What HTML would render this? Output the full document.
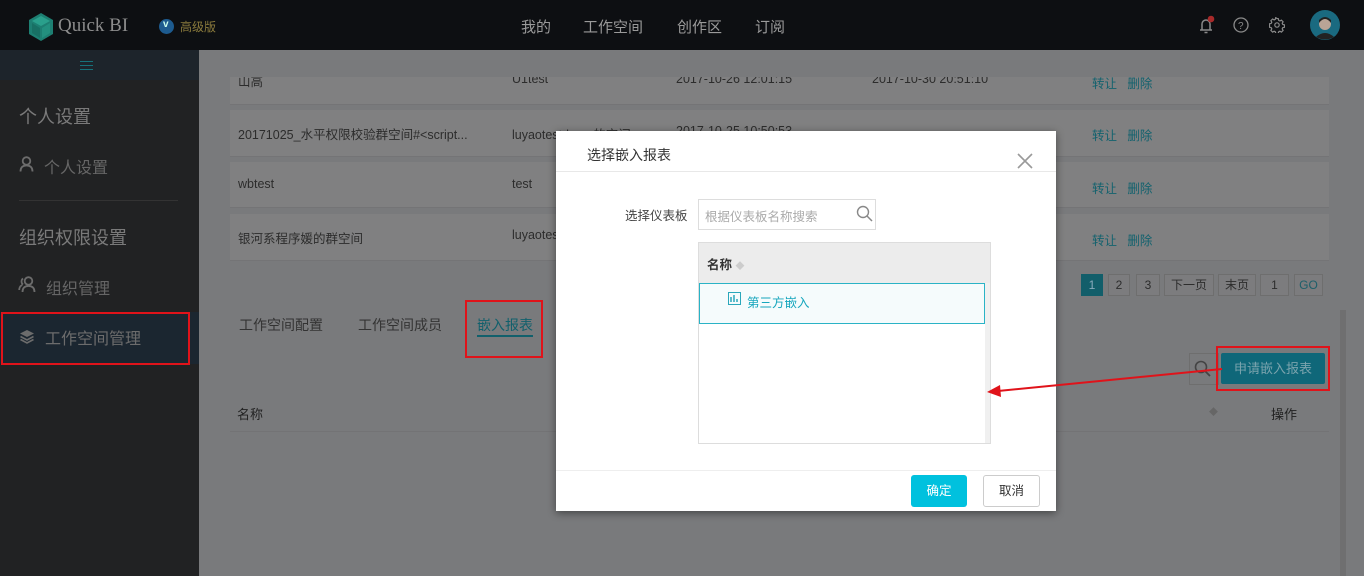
<!DOCTYPE html>
<html><head><meta charset="utf-8">
<style>
*{margin:0;padding:0;box-sizing:border-box}
body{width:1364px;height:576px;overflow:hidden;position:relative;background:#797a7c;font-family:"Liberation Sans","Noto Sans CJK SC",sans-serif;font-size:13px;color:#2e2e2e}
.abs{position:absolute}
.top{left:0;top:0;width:1364px;height:50px;background:#0d0f12}
.nav{color:#9a9a9a;font-size:15px;top:16px}
.side{left:0;top:50px;width:199px;height:526px;background:#212223}
.row{left:230px;width:1099px;background:#808081;box-shadow:0 1px 0 #747476;overflow:hidden}
.row span{position:absolute;color:#2c2c2c;font-size:12.5px}
.row .op{color:#13626e}
.modal{left:556px;top:131px;width:500px;height:380px;background:#fff;box-shadow:0 2px 8px rgba(0,0,0,.45)}
.pg{top:274px;height:22px;border:1px solid #6e6e6e;color:#2c2c2c;font-size:12px;text-align:center;line-height:20px;background:#7c7c7e}
.red{border:2px solid #e0131a}
</style></head><body>
<div class="abs top"></div>
<svg class="abs" style="left:28px;top:13px" width="26" height="28" viewBox="0 0 26 28"><polygon points="13,0 25,7 25,21 13,28 1,21 1,7" fill="#1d7f72"/><polygon points="13,3 22,8 13,13 4,8" fill="#2aa08c"/><polygon points="4,10 12,15 12,25 4,20" fill="#187064"/><polygon points="14,15 22,10 22,20 14,25" fill="#23907f"/></svg>
<div class="abs" style="left:58px;top:15px;color:#8c8c8c;font-size:19px;font-family:'Liberation Serif',serif">Quick BI</div>
<div class="abs" style="left:159px;top:19px;width:15px;height:15px;border-radius:50%;background:#1d5b8f"></div>
<div class="abs" style="left:163px;top:19px;color:#cfe;font-size:10px;font-weight:bold">v</div>
<div class="abs" style="left:180px;top:18px;color:#8a7a3c;font-size:12px">高级版</div>
<div class="abs nav" style="left:521px">我的</div>
<div class="abs nav" style="left:583px">工作空间</div>
<div class="abs nav" style="left:677px">创作区</div>
<div class="abs nav" style="left:755px">订阅</div>
<svg class="abs" style="left:1196px;top:15px" width="20" height="20" viewBox="0 0 20 20"><path d="M4 15h12M6 15V9a4 4 0 0 1 8 0v6M8.5 17.5h3" stroke="#8a8a8a" stroke-width="1.5" fill="none"/><circle cx="15" cy="4" r="3.3" fill="#a82a2a"/></svg>
<svg class="abs" style="left:1233px;top:17px" width="16" height="16"><circle cx="8" cy="8" r="7" stroke="#8a8a8a" stroke-width="1.3" fill="none"/><text x="5" y="12" font-size="10" fill="#8a8a8a" font-family="Liberation Sans">?</text></svg>
<svg class="abs" style="left:1269px;top:17px" width="16" height="16" viewBox="0 0 16 16"><path d="M8 1.5l1.3.2.4 1.7 1.2.6 1.5-.9 1.7 1.7-.9 1.5.6 1.2 1.7.4v2.4l-1.7.4-.6 1.2.9 1.5-1.7 1.7-1.5-.9-1.2.6-.4 1.7H6.7l-.4-1.7-1.2-.6-1.5.9-1.7-1.7.9-1.5-.6-1.2-1.7-.4V6.8l1.7-.4.6-1.2-.9-1.5 1.7-1.7 1.5.9 1.2-.6.4-1.7z" fill="none" stroke="#8a8a8a" stroke-width="1.2"/><circle cx="8" cy="8" r="2.2" fill="none" stroke="#8a8a8a" stroke-width="1.2"/></svg>
<svg class="abs" style="left:1310px;top:10px" width="30" height="30"><circle cx="15" cy="15" r="15" fill="#1a6a80"/><circle cx="15" cy="14" r="6" fill="#b9a496"/><path d="M9 13q6-8 12 0v-3q-6-6-12 0z" fill="#222"/><path d="M6 27q9-8 18 0q-9 5-18 0z" fill="#222"/></svg>

<div class="abs side"></div>
<div class="abs" style="left:0;top:50px;width:199px;height:30px;background:#1d242b"></div>
<div class="abs" style="left:80px;top:61px;width:13px;height:9px;border-top:1px solid #16717a;border-bottom:1px solid #16717a"></div>
<div class="abs" style="left:80px;top:65px;width:13px;height:1px;background:#16717a"></div>
<div class="abs" style="left:19px;top:103px;color:#7a7a7a;font-size:18px">个人设置</div>
<svg class="abs" style="left:19px;top:156px" width="15" height="16"><circle cx="7.5" cy="5" r="3.8" fill="none" stroke="#6c6c6c" stroke-width="1.8"/><path d="M1.5 15.5q0-6 6-6t6 6" fill="none" stroke="#6c6c6c" stroke-width="1.8"/></svg>
<div class="abs" style="left:44px;top:154px;color:#666;font-size:16px">个人设置</div>
<div class="abs" style="left:19px;top:200px;width:159px;height:1px;background:#333"></div>
<div class="abs" style="left:19px;top:224px;color:#7a7a7a;font-size:18px">组织权限设置</div>
<svg class="abs" style="left:18px;top:276px" width="18" height="17"><circle cx="10.5" cy="5" r="3.8" fill="none" stroke="#6c6c6c" stroke-width="1.8"/><path d="M4.5 16q0-6 6-6t6 6" fill="none" stroke="#6c6c6c" stroke-width="1.8"/><path d="M5 2.5a3.8 3.8 0 0 0 0 6M1.2 14q0-3.5 3-5" fill="none" stroke="#6c6c6c" stroke-width="1.8"/></svg>
<div class="abs" style="left:46px;top:275px;color:#666;font-size:16px">组织管理</div>
<div class="abs" style="left:0;top:312px;width:199px;height:52px;background:#1b2630"></div>
<svg class="abs" style="left:19px;top:329px" width="16" height="15"><path d="M8 1L15 4.5 8 8 1 4.5z" fill="#6c6c6c"/><path d="M1.5 7.5L8 11l6.5-3.5M1.5 10.5L8 14l6.5-3.5" fill="none" stroke="#6c6c6c" stroke-width="1.6"/></svg>
<div class="abs" style="left:45px;top:325px;color:#6c6c6c;font-size:16px">工作空间管理</div>
<div class="abs red" style="left:1px;top:312px;width:189px;height:53px"></div>

<div class="abs row" style="top:77px;height:27px"><span style="left:8px;top:-6px">山高</span><span style="left:282px;top:-5px">U1test</span><span style="left:446px;top:-5px">2017-10-26 12:01:15</span><span style="left:642px;top:-5px">2017-10-30 20:51:10</span><span class="op" style="left:862px;top:-4px">转让&nbsp;&nbsp;&nbsp;删除</span></div>
<div class="abs row" style="top:110px;height:46px"><span style="left:8px;top:14px">20171025_水平权限校验群空间#&lt;script...</span><span style="left:282px;top:14px">luyaotestdemo的空间</span><span style="left:446px;top:14px">2017-10-25 10:50:53</span><span class="op" style="left:862px;top:15px">转让&nbsp;&nbsp;&nbsp;删除</span></div>
<div class="abs row" style="top:162px;height:45px"><span style="left:8px;top:15px">wbtest</span><span style="left:282px;top:15px">test</span><span class="op" style="left:862px;top:16px">转让&nbsp;&nbsp;&nbsp;删除</span></div>
<div class="abs row" style="top:214px;height:46px"><span style="left:8px;top:14px">银河系程序媛的群空间</span><span style="left:282px;top:14px">luyaotest</span><span class="op" style="left:862px;top:16px">转让&nbsp;&nbsp;&nbsp;删除</span></div>
<div class="abs" style="left:1340px;top:310px;width:6px;height:266px;background:#6f6f70"></div>

<div class="abs pg" style="left:1081px;width:22px;background:#125e6a;border-color:#125e6a;color:#8ab">1</div>
<div class="abs pg" style="left:1108px;width:22px">2</div>
<div class="abs pg" style="left:1136px;width:24px">3</div>
<div class="abs pg" style="left:1164px;width:50px">下一页</div>
<div class="abs pg" style="left:1218px;width:38px">末页</div>
<div class="abs pg" style="left:1260px;width:29px">1</div>
<div class="abs pg" style="left:1294px;width:29px;color:#1d5f6a">GO</div>

<div class="abs" style="left:239px;top:315px;font-size:14px;color:#333">工作空间配置</div>
<div class="abs" style="left:358px;top:315px;font-size:14px;color:#333">工作空间成员</div>
<div class="abs" style="left:477px;top:315px;font-size:14px;color:#11606c">嵌入报表</div>
<div class="abs" style="left:477px;top:335px;width:56px;height:2px;background:#11606c"></div>
<div class="abs red" style="left:465px;top:300px;width:78px;height:58px"></div>

<div class="abs" style="left:1189px;top:353px;width:30px;height:32px;border:1px solid #6e6e6e"></div>
<svg class="abs" style="left:1194px;top:360px" width="18" height="18"><circle cx="7" cy="7" r="5.5" stroke="#444" stroke-width="1.6" fill="none"/><path d="M11 11L16 16" stroke="#444" stroke-width="1.8"/></svg>
<div class="abs" style="left:1221px;top:353px;width:104px;height:31px;background:#0f6779;border-radius:2px;color:#7aa3ad;font-size:13px;text-align:center;line-height:31px">申请嵌入报表</div>
<div class="abs red" style="left:1216px;top:346px;width:114px;height:45px"></div>
<div class="abs" style="left:1209px;top:405px;color:#666;font-size:9px">◆</div>
<div class="abs" style="left:1271px;top:404px;font-size:13px;color:#222">操作</div>
<div class="abs" style="left:237px;top:404px;font-size:13px;color:#222">名称</div>
<div class="abs" style="left:230px;top:431px;width:1099px;height:1px;background:#737375"></div>

<div class="abs modal">
 <div class="abs" style="left:31px;top:14px;font-size:14px;color:#333">选择嵌入报表</div>
 <svg class="abs" style="left:461px;top:22px" width="16" height="16"><path d="M1 1L15 15M15 1L1 15" stroke="#999" stroke-width="1.6"/></svg>
 <div class="abs" style="left:0;top:40px;width:500px;height:1px;background:#e8e8e8"></div>
 <div class="abs" style="left:69px;top:74px;font-size:12.5px;color:#444">选择仪表板</div>
 <div class="abs" style="left:142px;top:68px;width:178px;height:31px;border:1px solid #ddd"></div>
 <div class="abs" style="left:149px;top:75px;font-size:12.5px;color:#aaa">根据仪表板名称搜索</div>
 <svg class="abs" style="left:300px;top:74px" width="17" height="17"><circle cx="7" cy="7" r="5.5" stroke="#888" stroke-width="1.4" fill="none"/><path d="M11 11L16 16" stroke="#888" stroke-width="1.5"/></svg>
 <div class="abs" style="left:142px;top:111px;width:293px;height:202px;border:1px solid #ddd;background:#fff"></div>
 <div class="abs" style="left:143px;top:112px;width:291px;height:40px;background:#ececec"></div>
 <div class="abs" style="left:429px;top:152px;width:5px;height:160px;background:#f0f0f0"></div>
 <div class="abs" style="left:151px;top:123px;font-size:12.5px;color:#333;font-weight:bold">名称 <span style="color:#ccc;font-size:9px">◆</span></div>
 <div class="abs" style="left:143px;top:152px;width:286px;height:41px;border:1px solid #2ab3c6;background:#f5fbfc"></div>
 <svg class="abs" style="left:172px;top:161px" width="13" height="13"><rect x=".5" y=".5" width="12" height="12" fill="none" stroke="#2aa7bb"/><path d="M3 10V5M6 10V3M9 10V7" stroke="#2aa7bb" stroke-width="1.5"/></svg>
 <div class="abs" style="left:191px;top:161px;font-size:12.5px;color:#16a6bd">第三方嵌入</div>
 <div class="abs" style="left:0;top:339px;width:500px;height:1px;background:#eee"></div>
 <div class="abs" style="left:355px;top:344px;width:56px;height:32px;border-radius:3px;background:#00c1de;color:#fff;font-size:12.5px;text-align:center;line-height:32px">确定</div>
 <div class="abs" style="left:427px;top:344px;width:57px;height:32px;border-radius:3px;border:1px solid #ccc;color:#333;font-size:12.5px;text-align:center;line-height:30px">取消</div>
</div>

<svg class="abs" style="left:0;top:0" width="1364" height="576"><line x1="1222" y1="369" x2="998" y2="391" stroke="#e0131a" stroke-width="2"/><polygon points="987,392 1000,385 1001,397" fill="#e0131a"/></svg>
</body></html>
